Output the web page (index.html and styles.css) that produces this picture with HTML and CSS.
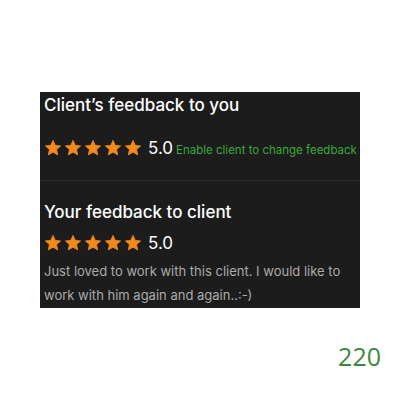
FILE: index.html
```html
<!DOCTYPE html>
<html lang="en">
<head>
    <meta charset="UTF-8">
    <title>Feedback</title>
    <link rel="stylesheet" href="styles.css">
</head>
<body>
    <div class="card">
        <!-- Client's rating -->
        <div class="section top">
            <h2>Client’s feedback to you</h2>
            <div class="rating">
                <span class="stars">
                    <svg viewBox="0 0 24 24"><path d="M12 1.8l3 6.6 7.2.8-5.4 4.9 1.5 7.1L12 17.6l-6.3 3.6 1.5-7.1L1.8 9.2 9 8.4z"/></svg>
                    <svg viewBox="0 0 24 24"><path d="M12 1.8l3 6.6 7.2.8-5.4 4.9 1.5 7.1L12 17.6l-6.3 3.6 1.5-7.1L1.8 9.2 9 8.4z"/></svg>
                    <svg viewBox="0 0 24 24"><path d="M12 1.8l3 6.6 7.2.8-5.4 4.9 1.5 7.1L12 17.6l-6.3 3.6 1.5-7.1L1.8 9.2 9 8.4z"/></svg>
                    <svg viewBox="0 0 24 24"><path d="M12 1.8l3 6.6 7.2.8-5.4 4.9 1.5 7.1L12 17.6l-6.3 3.6 1.5-7.1L1.8 9.2 9 8.4z"/></svg>
                    <svg viewBox="0 0 24 24"><path d="M12 1.8l3 6.6 7.2.8-5.4 4.9 1.5 7.1L12 17.6l-6.3 3.6 1.5-7.1L1.8 9.2 9 8.4z"/></svg>
                </span>
                <span class="score">5.0</span>
                <a class="enable" href="#">Enable client to change feedback</a>
            </div>
        </div>

        <!-- Own rating -->
        <div class="section bottom">
            <h2>Your feedback to client</h2>
            <div class="rating">
                <span class="stars">
                    <svg viewBox="0 0 24 24"><path d="M12 1.8l3 6.6 7.2.8-5.4 4.9 1.5 7.1L12 17.6l-6.3 3.6 1.5-7.1L1.8 9.2 9 8.4z"/></svg>
                    <svg viewBox="0 0 24 24"><path d="M12 1.8l3 6.6 7.2.8-5.4 4.9 1.5 7.1L12 17.6l-6.3 3.6 1.5-7.1L1.8 9.2 9 8.4z"/></svg>
                    <svg viewBox="0 0 24 24"><path d="M12 1.8l3 6.6 7.2.8-5.4 4.9 1.5 7.1L12 17.6l-6.3 3.6 1.5-7.1L1.8 9.2 9 8.4z"/></svg>
                    <svg viewBox="0 0 24 24"><path d="M12 1.8l3 6.6 7.2.8-5.4 4.9 1.5 7.1L12 17.6l-6.3 3.6 1.5-7.1L1.8 9.2 9 8.4z"/></svg>
                    <svg viewBox="0 0 24 24"><path d="M12 1.8l3 6.6 7.2.8-5.4 4.9 1.5 7.1L12 17.6l-6.3 3.6 1.5-7.1L1.8 9.2 9 8.4z"/></svg>
                </span>
                <span class="score">5.0</span>
            </div>
            <p class="comment">Just loved to work with this client. I would like to work with him again and again..:-)</p>
        </div>
    </div>

    <div class="count">220</div>
</body>
</html>
```

FILE: styles.css
```css
body {
    margin: 0;
    background: #fff;
    font-family: Inter, "Liberation Sans", sans-serif;
}

.card {
    width: 320px;
    margin: 92px 0 0 40px;
    background-color: #1c1c1c;
    color: #fff;
}

.section {
    padding: 0 4px;
}

.top {
    padding-top: 2px;
    padding-bottom: 22px;
    border-bottom: 1px solid #303030;
}

.bottom {
    padding-top: 20px;
    padding-bottom: 1px;
}

h2 {
    margin: 0;
    font-size: 17px;
    font-weight: 500;
    line-height: 22px;
}

.rating {
    display: flex;
    align-items: baseline;
    margin-top: 22px;
}

.bottom .rating {
    margin-top: 10px;
}

.stars {
    display: flex;
    gap: 2px;
    align-self: center;
}

.stars svg {
    width: 18px;
    height: 18px;
    fill: #f28a1c;
    stroke: #f28a1c;
    stroke-width: 1;
    stroke-linejoin: round;
}

.score {
    margin-left: 6px;
    font-size: 17px;
}

.enable {
    margin-left: 3px;
    font-size: 11.5px;
    color: #3aa83a;
    text-decoration: none;
    white-space: nowrap;
}

.comment {
    margin: 6px 0 0;
    font-size: 13px;
    line-height: 24px;
    color: #ababab;
}

.count {
    margin: 31px 19px 0 0;
    text-align: right;
    font-family: "Open Sans", sans-serif;
    font-size: 25px;
    color: #3b8a3b;
}
```
